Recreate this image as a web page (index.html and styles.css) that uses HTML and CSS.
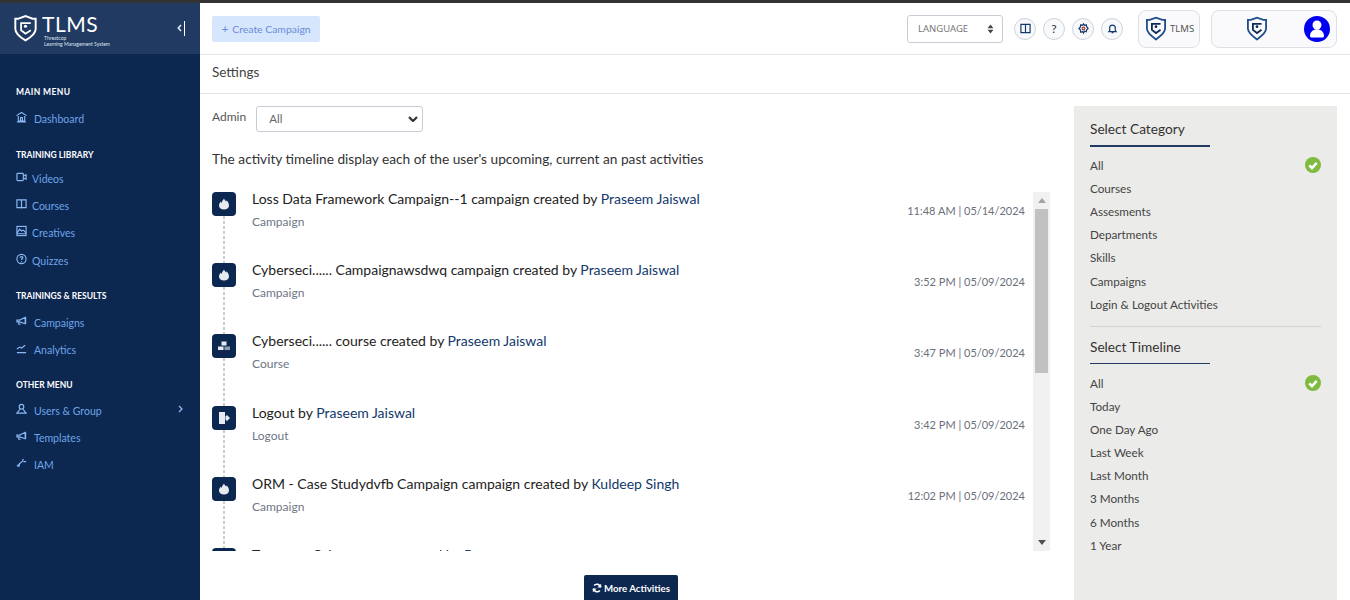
FILE: index.html
```html
<!DOCTYPE html>
<html lang="en">
<head>
<meta charset="utf-8">
<title>TLMS Settings</title>
<link rel="stylesheet" href="styles.css">
</head>
<body>
<div class="topstrip"></div>
<div class="app">
  <aside class="sidebar">
    <div class="brand">
      <svg class="brand-logo" viewBox="0 0 26 30"><path d="M5 4.500 13 1.500 21 4.500H24.500V16C24.500 21 18 26 13 29 8 26 1.500 21 1.500 16V4.500Z" fill="none" stroke="#fff" stroke-width="2.200"/><path d="M19 9.500H8V17.500L13 21.500 19 17.500" fill="none" stroke="#fff" stroke-width="2"/><circle cx="13" cy="13" r="1.800" fill="#fff"/></svg>
      <div class="brand-text">
        <div class="brand-name">TLMS</div>
        <div class="brand-sub">Threatcop<br>Learning Management System</div>
      </div>
      <div class="collapse"><svg class="chev" viewBox="0 0 5 8"><path d="M4 1 1.300 4 4 7" fill="none" stroke="#dbe9fb" stroke-width="1.600"/></svg><span class="bar"></span></div>
    </div>
    <nav class="nav">
      <div class="nav-head first">MAIN MENU</div>
      <a class="nav-item wide item-dash"><svg class="ni" viewBox="0 0 12 12"><path d="M.5 4.500 6 1l5.500 3.500M2.500 5v5.500h7V5M5 10.500V6.500h2v4M1 11.500h10"/></svg>Dashboard</a>
      <div class="nav-head lib">TRAINING LIBRARY</div>
      <a class="nav-item"><svg class="ni" viewBox="0 0 12 12"><rect x="1" y="2" width="7" height="8" rx="1"/><path d="M8 5l3-1.500v5L8 7"/></svg>Videos</a>
      <a class="nav-item"><svg class="ni" viewBox="0 0 12 12"><path d="M1 1.500h10v8.500H1zM6 1.500V11"/></svg>Courses</a>
      <a class="nav-item"><svg class="ni" viewBox="0 0 12 12"><rect x="1" y="1" width="10" height="10"/><path d="M1 8l3-4 2 2 2-1 3 3M1 9h10"/></svg>Creatives</a>
      <a class="nav-item"><svg class="ni" viewBox="0 0 12 12"><circle cx="6" cy="6" r="5"/><path d="M4.500 4.500C4.500 3 7.500 3 7.500 4.500 7.500 5.500 6 5.500 6 7M6 8.500v1"/></svg>Quizzes</a>
      <div class="nav-head res">TRAININGS &amp; RESULTS</div>
      <a class="nav-item wide"><svg class="ni" viewBox="0 0 12 12"><path d="M1 5h3l6-3v7L4 7H1zM3 7v2.500h2M10.500 2v7"/></svg>Campaigns</a>
      <a class="nav-item wide"><svg class="ni" viewBox="0 0 12 12"><path d="M1 11h10M1 7l3-2 2 1 4-3"/></svg>Analytics</a>
      <div class="nav-head other">OTHER MENU</div>
      <a class="nav-item wide"><svg class="ni" viewBox="0 0 12 12"><circle cx="6" cy="3.500" r="2.500"/><path d="M4.500 6 1 10.500h10L7.500 6"/></svg>Users &amp; Group<svg class="nav-arrow" viewBox="0 0 5 8"><path d="M1 1 4 4 1 7" fill="none" stroke="#8ab8f2" stroke-width="1.300"/></svg></a>
      <a class="nav-item wide"><svg class="ni" viewBox="0 0 12 12"><path d="M1 5h3l6-3v7L4 7H1zM3 7v2.500h2M10.500 2v7"/></svg>Templates</a>
      <a class="nav-item wide"><svg class="ni" viewBox="0 0 12 12"><path d="M1 9.500 7 4M4 6.500l-1 4M7 4 8 1.500M8 4.500h3"/></svg>IAM</a>
    </nav>
  </aside>
  <main class="main">
    <header class="topbar">
      <button class="create"><span class="plus">+</span>Create Campaign</button>
      <div class="top-right">
        <div class="lang">LANGUAGE<svg class="lang-caret" viewBox="0 0 8 12"><path d="M4 .5 7.500 5H.5zM4 11.500.5 7h7z"/></svg></div>
        <div class="round-icons">
          <span class="round"><svg viewBox="0 0 12 12"><path d="M1 1.500h10v9H1zM6 1.500v9"/></svg></span>
          <span class="round q">?</span>
          <span class="round"><svg viewBox="0 0 12 12"><circle cx="6" cy="6" r="1.500" stroke="#a83a3a"/><path d="M6 1l1 1.500 2-.500.500 2L11 6l-1.500 1.500-.500 2-2-.500L6 11 5 9.500 3 10l-.500-2.500L1 6l1.500-1.500L3 2l2 .500z"/></svg></span>
          <span class="round"><svg viewBox="0 0 12 12"><path d="M2 9.500h8L9 8V5C9 1.500 3 1.500 3 5v3zM5 10.500h2"/></svg></span>
        </div>
        <div class="tenant">
          <svg class="shield" viewBox="0 0 22 26"><path d="M4 3.500 11 1 18 3.500H21V13C21 18 15 22 11 25 7 22 1 18 1 13V3.500Z" fill="none" stroke="#1f4e8c" stroke-width="2"/><path d="M16 8H6.500V14.500L11 18 16 14.500" fill="none" stroke="#0d2a55" stroke-width="2"/><circle cx="11" cy="11" r="1.500" fill="#0d2a55"/></svg>
          <span>TLMS</span>
        </div>
        <div class="profile">
          <svg class="shield" viewBox="0 0 22 26"><path d="M4 3.500 11 1 18 3.500H21V13C21 18 15 22 11 25 7 22 1 18 1 13V3.500Z" fill="none" stroke="#1f4e8c" stroke-width="2"/><path d="M16 8H6.500V14.500L11 18 16 14.500" fill="none" stroke="#0d2a55" stroke-width="2"/><circle cx="11" cy="11" r="1.500" fill="#0d2a55"/></svg>
          <span class="avatar"><svg viewBox="0 0 26 26"><circle cx="13" cy="9" r="4.500" fill="#fff"/><path d="M6 20c0-9 14-9 14 0 0 1-1 1.500-2 1.500H8c-1 0-2-.500-2-1.500z" fill="#fff"/></svg></span>
        </div>
      </div>
    </header>
    <div class="pagebar">Settings</div>
    <div class="content">
      <section class="left">
        <div class="admin-row">
          <label class="admin-label">Admin</label>
          <div class="admin-select">All<svg viewBox="0 0 10 6"><path d="M1 1l4 4 4-4" fill="none" stroke="#333" stroke-width="2.200"/></svg></div>
        </div>
        <p class="intro">The activity timeline display each of the user's upcoming, current an past activities</p>
        <div class="timeline-wrap">
          <div class="timeline">
            <div class="tl-item">
              <span class="tl-icon"><svg viewBox="0 0 12 12"><path d="M6 .5c.5 1.500 1.500 2.300 2.200 3 .3-.4.4-.8.5-1.200C10 3.800 11 5.700 11 7.500 11 10 8.800 11.500 6 11.500S1 10 1 7.500c0-1.500.7-2.800 1.800-4 0 .7.2 1.200.6 1.500C3.800 3.500 5 2 6 .5z"/></svg></span>
              <div class="tl-body"><div class="tl-title">Loss Data Framework Campaign--1 campaign created by <b>Praseem Jaiswal</b></div><div class="tl-type">Campaign</div></div>
              <div class="tl-date">11:48 AM | 05/14/2024</div>
            </div>
            <div class="tl-item">
              <span class="tl-icon"><svg viewBox="0 0 12 12"><path d="M6 .5c.5 1.500 1.500 2.300 2.200 3 .3-.4.4-.8.5-1.200C10 3.800 11 5.700 11 7.500 11 10 8.800 11.500 6 11.500S1 10 1 7.500c0-1.500.7-2.800 1.800-4 0 .7.2 1.200.6 1.500C3.800 3.500 5 2 6 .5z"/></svg></span>
              <div class="tl-body"><div class="tl-title">Cyberseci...... Campaignawsdwq campaign created by <b>Praseem Jaiswal</b></div><div class="tl-type">Campaign</div></div>
              <div class="tl-date">3:52 PM | 05/09/2024</div>
            </div>
            <div class="tl-item">
              <span class="tl-icon"><svg viewBox="0 0 12 12"><path d="M3.500 1.500h5v4h-5zM0 6.500h5.500V10H0z"/><path d="M6.500 6.500H12V10H6.500z" opacity=".6"/></svg></span>
              <div class="tl-body"><div class="tl-title">Cyberseci...... course created by <b>Praseem Jaiswal</b></div><div class="tl-type">Course</div></div>
              <div class="tl-date">3:47 PM | 05/09/2024</div>
            </div>
            <div class="tl-item">
              <span class="tl-icon"><svg viewBox="0 0 12 12"><path d="M1 0h6v12H1zM8.500 4V2.500L12 6 8.500 9.500V8H7.500V4z"/></svg></span>
              <div class="tl-body"><div class="tl-title">Logout by <b>Praseem Jaiswal</b></div><div class="tl-type">Logout</div></div>
              <div class="tl-date">3:42 PM | 05/09/2024</div>
            </div>
            <div class="tl-item">
              <span class="tl-icon"><svg viewBox="0 0 12 12"><path d="M6 .5c.5 1.500 1.500 2.300 2.200 3 .3-.4.4-.8.5-1.200C10 3.800 11 5.700 11 7.500 11 10 8.800 11.500 6 11.500S1 10 1 7.500c0-1.500.7-2.800 1.800-4 0 .7.2 1.200.6 1.500C3.800 3.500 5 2 6 .5z"/></svg></span>
              <div class="tl-body"><div class="tl-title">ORM - Case Studydvfb Campaign campaign created by <b>Kuldeep Singh</b></div><div class="tl-type">Campaign</div></div>
              <div class="tl-date">12:02 PM | 05/09/2024</div>
            </div>
            <div class="tl-item">
              <span class="tl-icon"></span>
              <div class="tl-body"><div class="tl-title">Tesssssss Cyber course created by <b>Praseem</b></div></div>
            </div>
          </div>
          <div class="scrollbar">
            <span class="sb-arrow up"></span>
            <span class="sb-thumb"></span>
            <span class="sb-arrow down"></span>
          </div>
        </div>
        <div class="more-row"><button class="more"><svg viewBox="0 0 12 12"><path d="M10.500 5A4.700 4.700 0 0 0 2.500 3M1.500 7a4.700 4.700 0 0 0 8 2" fill="none" stroke="#fff" stroke-width="2"/><path d="M11 1v4.500H6.500zM1 11V6.500h4.500z" fill="#fff"/></svg>More Activities</button></div>
      </section>
      <aside class="filters">
        <h3 class="filter-title">Select Category</h3>
        <ul class="filter-list">
          <li>All<svg class="check" viewBox="0 0 16 16"><circle cx="8" cy="8" r="8" fill="#7fbb3f"/><path d="M4.300 8.300 7 11l4.700-5.200" fill="none" stroke="#fff" stroke-width="2.600"/></svg></li>
          <li>Courses</li>
          <li>Assesments</li>
          <li>Departments</li>
          <li>Skills</li>
          <li>Campaigns</li>
          <li>Login &amp; Logout Activities</li>
        </ul>
        <hr class="filter-sep">
        <h3 class="filter-title thin">Select Timeline</h3>
        <ul class="filter-list tight">
          <li>All<svg class="check" viewBox="0 0 16 16"><circle cx="8" cy="8" r="8" fill="#7fbb3f"/><path d="M4.300 8.300 7 11l4.700-5.200" fill="none" stroke="#fff" stroke-width="2.600"/></svg></li>
          <li>Today</li>
          <li>One Day Ago</li>
          <li>Last Week</li>
          <li>Last Month</li>
          <li>3 Months</li>
          <li>6 Months</li>
          <li>1 Year</li>
        </ul>
      </aside>
    </div>
  </main>
</div>
</body>
</html>
```
FILE: styles.css
```css
* { box-sizing: border-box; }
html, body { height: 100%; }
body { margin: 0; height: 600px; overflow: hidden; background: #fff; font-family: "Lato", "Noto Sans", sans-serif; color: #333; }
.topstrip { height: 3px; background: #333; }
.app { display: flex; height: 597px; }

.sidebar { width: 200px; flex: none; background: #0c2851; color: #6fa4e8; }
.brand { height: 51px; background: #203a62; display: flex; padding: 10px 15px 10px 14px; position: relative; }
.brand-logo { width: 23px; height: 30px; flex: none; }
.brand-text { margin-left: 5px; color: #fff; }
.brand-name { font-size: 21px; line-height: 22px; letter-spacing: .5px; }
.brand-sub { font-size: 5px; line-height: 6px; color: #dfe6f0; padding-left: 2px; }
.collapse { margin-left: auto; display: flex; align-items: center; height: 30px; gap: 2px; }
.chev { width: 5px; height: 8px; }
.bar { width: 1.500px; height: 15px; background: #fff; }

.nav { padding-left: 16px; padding-right: 14px; }
.nav-head { font-size: 8.500px; line-height: 12px; font-weight: 700; color: #fff; box-sizing: content-box; height: 12px; }
.nav-head.first { margin-top: 32px; padding-bottom: 7px; letter-spacing: .4px; }
.nav-head.lib { margin-top: 17px; padding-bottom: 4px; }
.nav-head.res { margin-top: 15.800px; padding-bottom: 7px; }
.nav-head.other { margin-top: 15.400px; padding-bottom: 6px; }
.nav-item { display: flex; align-items: center; height: 27.300px; font-size: 10.500px; color: #6fa4e8; }
.item-dash { height: 27px; }
.nav-item .ni { width: 11px; height: 12px; flex: none; margin-right: 5px; margin-top: -4px; fill: none; stroke: #8ab8f2; stroke-width: 1.250; }
.nav-item.wide .ni { margin-right: 7px; }
.nav-arrow { margin-left: auto; margin-right: 3px; margin-top: -4px; width: 5px; height: 8px; flex: none; }

.main { flex: 1; min-width: 0; display: flex; flex-direction: column; }
.topbar { height: 52px; flex: none; display: flex; align-items: center; padding: 0 13px 0 12px; border-bottom: 1px solid #e3e5ea; }
.create { height: 26px; width: 108px; border: 0; border-radius: 2px; background: #d6e6fd; color: #6a8cd6; font-family: inherit; font-size: 10.400px; padding: 0; }
.plus { margin-right: 4px; font-size: 12px; }
.top-right { margin-left: auto; display: flex; align-items: center; }
.lang { width: 96px; height: 28px; border: 1px solid #c9ccd4; border-radius: 3px; display: flex; align-items: center; padding: 0 8px 0 10px; font-size: 9.500px; color: #777; justify-content: space-between; font-family: "Noto Sans", sans-serif; }
.lang-caret { width: 7px; height: 10px; fill: #444; }
.round-icons { display: flex; gap: 7px; margin-left: 11px; }
.round { width: 22px; height: 22px; border: 1px solid #cfd3db; border-radius: 50%; background: #f8f9fb; display: flex; align-items: center; justify-content: center; font-size: 12px; color: #333; }
.round svg { width: 11px; height: 11px; fill: none; stroke: #12386c; stroke-width: 1.300; }
.tenant { margin-left: 15px; width: 62px; height: 38px; border: 1px solid #dcdfe5; border-radius: 8px; background: #fafafc; display: flex; align-items: center; padding-left: 7px; gap: 4px; font-size: 9.500px; color: #555; font-family: "Noto Sans", sans-serif; }
.shield { width: 20px; height: 25px; flex: none; }
.profile { margin-left: 11px; width: 126px; height: 38px; border: 1px solid #dcdfe5; border-radius: 8px; background: #fafafc; display: flex; align-items: center; padding: 0 6px 0 35px; justify-content: space-between; }
.avatar { width: 26px; height: 26px; border-radius: 50%; background: #0000f0; display: block; }
.avatar svg { display: block; width: 26px; height: 26px; }

.pagebar { height: 39px; flex: none; display: flex; align-items: center; padding: 0 0 5px 12px; border-bottom: 1px solid #e3e5ea; font-size: 13.500px; color: #444; }

.content { flex: 1; min-height: 0; display: flex; padding: 12px 13px 0 12px; }
.left { width: 838px; flex: none; }
.admin-row { display: flex; align-items: flex-start; }
.admin-label { font-size: 12px; color: #555; line-height: 22px; }
.admin-select { margin-left: 10px; width: 167px; height: 26px; border: 1px solid #c9ccd4; border-radius: 3px; display: flex; align-items: center; justify-content: space-between; padding: 0 4px 2px 12px; font-size: 11.500px; color: #666; }
.admin-select svg { width: 10px; height: 6px; margin-top: 2px; }
.intro { margin: 18px 0 0; font-size: 13.700px; line-height: 18px; color: #333; }
.timeline-wrap { display: flex; margin-top: 22px; height: 361px; }
.timeline { flex: 1; min-width: 0; overflow: hidden; padding-top: 2px; }
.tl-item { height: 71.200px; display: flex; position: relative; }
.tl-item::after { content: ""; position: absolute; left: 11px; top: 24px; bottom: 0; width: 2px; background: repeating-linear-gradient(to bottom, #ccc 0 3px, transparent 3px 5px); }
.tl-icon { width: 24px; height: 24px; flex: none; border-radius: 4px; background: #0c2851; display: flex; align-items: center; justify-content: center; }
.tl-icon svg { width: 12px; height: 12px; fill: #e6ebf2; }
.tl-body { margin-left: 16px; flex: 1; min-width: 0; }
.tl-title { font-size: 14px; line-height: 14px; color: #222; }
.tl-title b { font-weight: 400; color: #12386c; }
.tl-type { font-size: 12px; line-height: 14px; color: #6d7686; margin-top: 9px; }
.tl-date { width: 140px; text-align: right; font-size: 11px; line-height: 14px; color: #6b6f7c; margin-top: 12px; margin-right: 8px; flex: none; }

.scrollbar { width: 17px; flex: none; margin-top: 2px; background: #f1f1f1; display: flex; flex-direction: column; align-items: center; }
.sb-arrow { height: 17px; flex: none; width: 0; border-left: 4px solid transparent; border-right: 4px solid transparent; }
.sb-arrow.up { border-bottom: 5px solid #a3a3a3; height: 5px; margin: 6px 0; }
.sb-arrow.down { border-top: 5px solid #505050; height: 5px; margin: auto 0 6px; }
.sb-thumb { width: 13px; height: 164px; background: #c1c1c1; }

.more-row { display: flex; justify-content: center; margin-top: 24px; }
.more { width: 94px; height: 26px; border: 0; border-radius: 2px; background: #0c2851; color: #fff; font-family: inherit; font-size: 9.700px; display: flex; align-items: center; justify-content: center; gap: 2px; padding: 0; font-weight: 700; }
.more svg { width: 10px; height: 10px; }

.filters { margin-left: 24px; width: 263px; flex: none; background: #ebebe9; padding: 14px 16px 0; }
.filter-title { margin: 0; width: 120px; font-size: 13.700px; font-weight: 400; line-height: 18px; padding-bottom: 7px; border-bottom: 2px solid #203a62; color: #333; }
.filter-title.thin { border-bottom-width: 1px; }
.filter-list { list-style: none; margin: 6px 0 0; padding: 0; }
.filter-list.tight { margin-top: 6.600px; }
.filter-list li { height: 23.200px; display: flex; align-items: center; justify-content: space-between; font-size: 11.700px; color: #444; }
.check { width: 16px; height: 16px; }
.filter-sep { border: 0; border-top: 1px solid #d3d3d1; margin: 11px 0 11px; }
```
